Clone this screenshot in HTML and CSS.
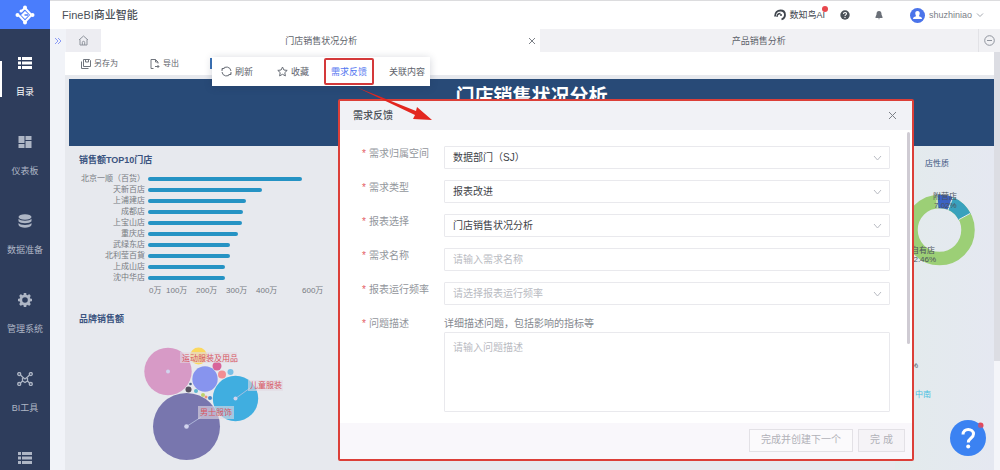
FILE: index.html
```html
<!DOCTYPE html>
<html lang="zh-CN">
<head>
<meta charset="utf-8">
<title>FineBI商业智能</title>
<link rel="stylesheet" href="styles.css">
</head>
<body>
<div class="app">
  <nav class="sidebar">
    <a class="logo" href="#" aria-label="FineBI">
      <svg width="20" height="20" viewBox="0 0 20 20" fill="none" stroke="#fff">
        <path d="M6 6.500 10 3l6.500 7L10 17l-6-6.500" stroke-width="2"/>
        <path d="M10 6 14 10 10 14 6 10z" fill="#fff" stroke="none"/>
        <path d="M9.500 10H13" stroke="#4a7dfc" stroke-width="1.500"/>
        <g fill="#fff" stroke="none"><circle cx="10" cy="2.500" r="2"/><circle cx="17.500" cy="10" r="2"/><circle cx="10" cy="17.500" r="2"/><circle cx="2.500" cy="10" r="2"/><circle cx="6" cy="6" r="1.500"/></g>
      </svg>
    </a>
    <a class="nav-item active" href="#">
      <svg width="16" height="14" viewBox="0 0 16 14" fill="currentColor"><path d="M1 1h3v3H1zM5 1h10v3H5zM1 5.500h3v3H1zM5 5.500h10v3H5zM1 10h3v3H1zM5 10h10v3H5z"/></svg>
      <span>目录</span>
    </a>
    <a class="nav-item" href="#">
      <svg width="16" height="14" viewBox="0 0 16 14" fill="currentColor"><path d="M1.500 1h6v7h-6zM8.500 1h6v4h-6zM1.500 9h6v4h-6zM8.500 6h6v7h-6z"/></svg>
      <span>仪表板</span>
    </a>
    <a class="nav-item" href="#">
      <svg width="16" height="14" viewBox="0 0 16 14" fill="currentColor"><ellipse cx="8" cy="3" rx="6.500" ry="2.800"/><path d="M1.500 4.800c1.500 2.600 11.500 2.600 13 0v2.400c-1.500 2.600-11.500 2.600-13 0zM1.500 9c1.500 2.600 11.500 2.600 13 0v2c-1.500 3.600-11.500 3.600-13 0z"/></svg>
      <span>数据准备</span>
    </a>
    <a class="nav-item" href="#">
      <svg width="16" height="14" viewBox="0 0 16 14" fill="none" stroke="currentColor"><circle cx="8" cy="7" r="4.200" stroke-width="2.800"/><path d="M8 0v2M8 12v2M1 7h2M13 7h2M3 2l1.500 1.500M11.500 10.500 13 12M13 2l-1.500 1.500M4.500 10.500 3 12" stroke-width="2.600"/></svg>
      <span>管理系统</span>
    </a>
    <a class="nav-item" href="#">
      <svg width="16" height="14" viewBox="0 0 16 14" fill="none" stroke="currentColor" stroke-width="1.300"><circle cx="2.200" cy="2" r="1.500"/><circle cx="13.800" cy="2" r="1.500"/><circle cx="2.200" cy="12" r="1.500"/><circle cx="13.800" cy="12" r="1.500"/><path d="M3.500 3 6 5.500M12.500 3 10 5.500M3.500 11 6 8.500M12.500 11 10 8.500M5.500 5l2.500 2 2.500-2M5.500 6v3L8 10.500 10.500 9V6"/></svg>
      <span>BI工具</span>
    </a>
    <a class="nav-item" href="#" aria-label="更多">
      <svg width="16" height="14" viewBox="0 0 16 14" fill="currentColor"><path d="M1 1h3v3H1zM5 1h10v3H5zM1 5.500h3v3H1zM5 5.500h10v3H5zM1 10h3v3H1zM5 10h10v3H5z"/></svg>
    </a>
  </nav>

  <div class="main">
    <header class="topbar">
      <h1 class="brand">FineBI商业智能</h1>
      <a class="ai-link" href="#">
        <svg width="12" height="12" viewBox="0 0 12 12" fill="none" stroke="#3f454d"><path d="M1 7.500C1 3.500 3.500 1.500 6.500 1.500c2.800 0 4.500 2 4.500 4.500 0 2.200-1.200 3.700-3.500 4.500" stroke-width="1.800"/><path d="M3 8c0-2 1.500-3.500 3.500-3.500" stroke-width="1.300"/><circle cx="7" cy="6" r="1" fill="#3f454d" stroke="none"/></svg>
        <span>数知鸟AI</span>
        <i class="dot"></i>
      </a>
      <button class="icon-button" aria-label="帮助">
        <svg width="10" height="10" viewBox="0 0 10 10"><circle cx="5" cy="5" r="4.700" fill="#4b5158"/><path d="M3.500 4c0-2 3-2 3-.2C6.500 5 5 4.800 5 6" fill="none" stroke="#fff" stroke-width="1.100"/><circle cx="5" cy="7.500" r=".7" fill="#fff"/></svg>
      </button>
      <button class="icon-button" aria-label="通知">
        <svg width="10" height="10" viewBox="0 0 10 10" fill="#6b7078"><path d="M5 1c2 0 2.500 1.500 2.500 3.500L8.500 7v1h-7V7l1-2.500C2.500 2.500 3 1 5 1zM4 8.500h2L5 9.500z"/></svg>
      </button>
      <button class="user">
        <svg width="15" height="15" viewBox="0 0 15 15"><circle cx="7.500" cy="7.500" r="7.500" fill="#4b74ea"/><path d="M7.500 3C9.200 3 10 4.200 9.700 5.800 9.500 7 9 7.500 9 8.200c2 .6 3 1 3 2.800H3c0-1.800 1-2.200 3-2.800 0-.7-.5-1.200-.7-2.400C5 4.200 5.800 3 7.500 3z" fill="#fff"/></svg>
        <span>shuzhiniao</span>
        <svg width="8" height="6" viewBox="0 0 8 6" fill="none" stroke="#a5a9b0"><path d="M1 1.500 4 4.500 7 1.500"/></svg>
      </button>
    </header>

    <div class="tabs">
      <button class="expand" aria-label="展开"><svg width="8" height="8" viewBox="0 0 8 8" fill="none" stroke="#8b9bf5"><path d="M1 1l3 3-3 3M4 1l3 3-3 3"/></svg></button>
      <button class="home" aria-label="首页"><svg width="11" height="11" viewBox="0 0 11 11" fill="none" stroke="#8d929b"><path d="M1 5 5.500 1 10 5M2 4.500V10h7V4.500M4.300 10V7.500a1.200 1.200 0 0 1 2.400 0V10"/></svg></button>
      <div class="tab current"><span>门店销售状况分析</span><button aria-label="关闭标签"><svg width="8" height="8" viewBox="0 0 8 8" fill="none" stroke="#7c8087"><path d="M1 1l6 6M7 1 1 7"/></svg></button></div>
      <div class="tab"><span>产品销售分析</span></div>
      <button class="tab-menu" aria-label="标签菜单"><svg width="11" height="11" viewBox="0 0 11 11" fill="none" stroke="#8f949d"><circle cx="5.500" cy="5.500" r="4.800"/><path d="M3 5.500h5"/></svg></button>
    </div>

    <div class="workspace">
      <div class="page">
        <div class="toolbar">
          <button><svg width="10" height="10" viewBox="0 0 10 10" fill="none" stroke="#70757d"><path d="M2.500.5h6l1 1v6h-7zM4.500.5v2.500h3V.5M.5 2.500v7h7"/></svg>另存为</button>
          <button><svg width="10" height="10" viewBox="0 0 10 10" fill="none" stroke="#70757d"><path d="M3.500 9.500H1v-9h4.500L8 3v1.500M5.500.5V3H8M5 7.500h4M7.500 6 9 7.500 7.500 9"/></svg>导出</button>
          <i class="marker"></i>
        </div>
        <div class="banner">门店销售状况分析</div>
        <div class="board">
          <div class="left">
            <section>
              <h2>销售额TOP10门店</h2>
              <div class="bars">
                <span>北京一顺（百货）</span><i style="width:154px"></i>
                <span>天新百店</span><i style="width:114px"></i>
                <span>上浦建店</span><i style="width:98px"></i>
                <span>成都店</span><i style="width:95px"></i>
                <span>上宝山店</span><i style="width:94px"></i>
                <span>重庆店</span><i style="width:90px"></i>
                <span>武绿东店</span><i style="width:82px"></i>
                <span>北利莹百貨</span><i style="width:82px"></i>
                <span>上成山店</span><i style="width:77px"></i>
                <span>沈中华店</span><i style="width:77px"></i>
              </div>
              <div class="axis"><span>0万</span><span>100万</span><span>200万</span><span>300万</span><span>400万</span><span>600万</span></div>
            </section>
            <section class="brands">
              <h2>品牌销售额</h2>
              <svg class="bubbles" width="150" height="120" viewBox="140 342 150 120">
                <circle cx="168" cy="371.500" r="23.700" fill="#d79ac6"/>
                <circle cx="198.500" cy="356" r="8.500" fill="#fbd85f"/>
                <circle cx="205" cy="379" r="12.700" fill="#8794ee"/>
                <circle cx="235.500" cy="398.500" r="22.700" fill="#40aee0"/>
                <circle cx="186.500" cy="426.500" r="33.500" fill="#7876ae"/>
                <circle cx="217" cy="366" r="4.500" fill="#d8649a"/><circle cx="222" cy="374.500" r="4" fill="#f48d92"/><circle cx="230.500" cy="372" r="3" fill="#79bfe5"/>
                <circle cx="188.500" cy="389.500" r="3" fill="#56505f"/><circle cx="190.500" cy="384" r="1.300" fill="#4d6386"/><circle cx="196" cy="391" r="2" fill="#5cb7cf"/><circle cx="203" cy="395" r="2" fill="#bed26d"/><circle cx="206" cy="397" r="1.500" fill="#ee9580"/><circle cx="210" cy="398" r="2" fill="#4888c8"/>
                <path d="M235.500 398.500 250 388M186.500 426.500l14-9" stroke="#b9c3e2" stroke-width=".8"/>
                <g fill="#d1d3ed"><circle cx="168" cy="371.500" r="2"/><circle cx="235.500" cy="398.500" r="2"/><circle cx="186.500" cy="426.500" r="2.300"/></g>
                <g fill="#e2dbe3" fill-opacity=".6"><path d="M180 352h57v11h-57zM248 380h35v11h-35zM198 406h36v13h-36z"/></g>
                <g class="bubble-text"><text x="182" y="361">运动服装及用品</text><text x="250" y="388">儿童服装</text><text x="200" y="415">男士服饰</text></g>
              </svg>
            </section>
          </div>
          <section class="right">
            <h2>店性质</h2>
            <svg width="99" height="240" viewBox="895 171 99 240">
              <circle cx="939.500" cy="230" r="28.500" fill="none" stroke="#9ccf76" stroke-width="13.500"/>
              <path d="M938 201.500a28.500 28.500 0 0 1 12 1.700" fill="none" stroke="#3b62c4" stroke-width="13.500"/>
              <path d="M950 203.200a28.500 28.500 0 0 1 14.600 13.400" fill="none" stroke="#39a1bd" stroke-width="13.500"/>
              <path d="M937 194v14M953 197l-5 13M959 219.500l11-6" stroke="#e6eaee"/>
              <g class="donut-text"><text x="933" y="199">附营店</text><text x="934" y="208">7.02%</text><text x="911" y="253">自有店</text><text x="909" y="262">82.46%</text><text x="911" y="368">%</text></g>
              <text class="region" x="915" y="397">中南</text>
            </svg>
          </section>
        </div>
      </div>
      <div class="scroll"><i></i></div>
    </div>
  </div>

  <div class="popup">
    <button><svg width="11" height="11" viewBox="0 0 11 11" fill="none" stroke="#686d76"><path d="M1 5V2.500h2.500M1.500 3.500a4.500 4.500 0 0 1 8.500 1.500M10 6v2.500H7.500M9.500 7.500A4.500 4.500 0 0 1 1 6"/></svg>刷新</button>
    <button><svg width="11" height="11" viewBox="0 0 11 11" fill="none" stroke="#686d76"><path d="M5.500 1l1.400 3 3.300.4-2.400 2.200.6 3.300-2.900-1.600-2.900 1.600.6-3.300L.8 4.400 4.100 4z"/></svg>收藏</button>
    <button class="picked">需求反馈</button>
    <button>关联内容</button>
  </div>

  <form class="dialog">
    <div class="dialog-head"><h2>需求反馈</h2><button type="button" aria-label="关闭"><svg width="9" height="9" viewBox="0 0 9 9" fill="none" stroke="#7c8087"><path d="M1 1l7 7M8 1 1 8"/></svg></button></div>
    <div class="dialog-body">
      <div class="fields">
        <label for="space">需求归属空间</label>
        <div class="pick"><select id="space"><option>数据部门（SJ）</option></select><svg width="9" height="6" viewBox="0 0 9 6"><path d="M1 1l3.500 4L8 1"/></svg></div>
        <label for="type">需求类型</label>
        <div class="pick"><select id="type"><option>报表改进</option></select><svg width="9" height="6" viewBox="0 0 9 6"><path d="M1 1l3.500 4L8 1"/></svg></div>
        <label for="report">报表选择</label>
        <div class="pick"><select id="report"><option>门店销售状况分析</option></select><svg width="9" height="6" viewBox="0 0 9 6"><path d="M1 1l3.500 4L8 1"/></svg></div>
        <label for="name">需求名称</label>
        <div class="pick"><input id="name" type="text" placeholder="请输入需求名称"></div>
        <label for="rate">报表运行频率</label>
        <div class="pick"><select id="rate" class="empty"><option>请选择报表运行频率</option></select><svg width="9" height="6" viewBox="0 0 9 6"><path d="M1 1l3.500 4L8 1"/></svg></div>
        <label for="desc">问题描述</label>
        <div class="describe"><p>详细描述问题，包括影响的指标等</p><textarea id="desc" placeholder="请输入问题描述"></textarea></div>
      </div>
      <i class="thumb"></i>
    </div>
    <div class="dialog-foot"><button type="button" class="wide">完成并创建下一个</button><button type="submit">完 成</button></div>
  </form>

  <svg class="arrow" width="80" height="36" viewBox="0 0 80 36" fill="#e3261f"><path d="M3 1 63 25l1-4 15 13-19-1 2-4z"/></svg>

  <button class="help" aria-label="在线帮助">
    <svg width="36" height="36" viewBox="0 0 36 36"><circle cx="30.500" cy="5.500" r="3" fill="#e4485a"/><circle cx="18" cy="18" r="18" fill="#3b82f2"/><circle cx="30.500" cy="5.500" r="2.500" fill="#e4485a" fill-opacity=".7"/><path d="M13 14.500c0-7 10.500-6.500 10.500-.5 0 4.500-5.200 4-5.200 8.500" fill="none" stroke="#fff" stroke-width="3"/><circle cx="18.200" cy="26.500" r="2" fill="#fff"/></svg>
  </button>
</div>
</body>
</html>
```
FILE: styles.css
```css
* { box-sizing: border-box; }
body {
  margin: 0;
  font-family: "Liberation Sans", "Noto Sans CJK SC", sans-serif;
  font-size: 9px;
  line-height: 14px;
  color: #5e636b;
}
h1, h2, p { margin: 0; }
a { color: inherit; text-decoration: none; }
svg { display: block; flex: none; }
button {
  border: 0;
  padding: 0;
  background: none;
  font: inherit;
  color: inherit;
  display: flex;
  align-items: center;
  justify-content: center;
}
.app {
  position: relative;
  display: flex;
  height: 100vh;
  overflow: hidden;
  background: #f1f3f8;
}

/* Sidebar */
.sidebar { flex: none; width: 50px; background: #2e3d5c; color: #aeb6c5; }
.logo { height: 29px; display: flex; align-items: center; justify-content: center; background: #4a7dfc; }
.nav-item {
  position: relative;
  height: 79px;
  padding-top: 27px;
  display: flex;
  flex-direction: column;
  align-items: center;
  gap: 15px;
}
.nav-item.active { color: #fff; }
.nav-item.active::before {
  content: "";
  position: absolute;
  left: 0;
  top: 32px;
  width: 2px;
  height: 36px;
  background: #fff;
}

/* Header */
.main { flex: 1; min-width: 0; display: flex; flex-direction: column; }
.topbar {
  flex: none;
  height: 29px;
  display: flex;
  align-items: center;
  padding: 0 16px 0 12px;
  background: #fff;
  border-top: 1px solid #dcdcde;
}
.brand { flex: 1; font-size: 11px; font-weight: 500; color: #4a4f57; }
.ai-link { position: relative; display: flex; align-items: center; gap: 3px; color: #40454d; }
.dot { position: absolute; right: -3px; top: -2px; width: 6px; height: 6px; border-radius: 50%; background: #e8484d; }
.icon-button { width: 10px; margin-left: 15px; }
.icon-button + .icon-button { margin-left: 24px; }
.user { margin-left: 26px; gap: 4px; color: #7b8088; }

/* Tabs */
.tabs { flex: none; height: 23px; display: flex; background: #f1f1f4; }
.expand { width: 16px; background: #f1f3f8; }
.home { width: 35px; background: #ededf2; }
.tab { flex: 1; display: flex; align-items: center; padding: 0 9px; }
.tab span { flex: 1; text-align: center; }
.tab.current { background: #fff; padding: 0 4px 0 14px; }
.tab-menu { width: 22px; border-left: 1px solid #e2e2e6; }

/* Report page */
.workspace { flex: 1; min-height: 0; display: flex; padding-left: 15px; }
.page { flex: 1; display: flex; flex-direction: column; background: #e7e9ee; }
.toolbar {
  flex: none;
  height: 23px;
  display: flex;
  align-items: center;
  gap: 32px;
  padding-left: 16px;
  margin-bottom: 4px;
  background: #fff;
  font-size: 8px;
}
.toolbar button { gap: 3px; }
.marker { width: 8px; height: 11px; margin-left: -1px; background: #3c74b8; }
.banner {
  flex: none;
  height: 67px;
  margin-left: 4px;
  padding-top: 5px;
  background: #284a77;
  color: #fff;
  font-size: 19px;
  font-weight: 700;
  line-height: 26px;
  text-align: center;
}
.board { flex: 1; display: flex; justify-content: space-between; }
.board h2 { font-size: 9px; font-weight: 700; color: #3b5480; }
.left { padding: 7px 0 0 14px; }
.bars {
  display: grid;
  grid-template-columns: 66px auto;
  grid-auto-rows: 11px;
  align-items: center;
  column-gap: 3px;
  margin-top: 6px;
  font-size: 8px;
  line-height: 11px;
  color: #777b82;
}
.bars span { text-align: right; white-space: nowrap; justify-self: end; }
.bars i { height: 4px; border-radius: 2px; background: #2593c4; }
.axis {
  display: grid;
  grid-template-columns: 17px 30px 30px 30px 46px 30px;
  padding: 1px 0 0 70px;
  font-size: 8px;
  color: #777b82;
}
.brands { margin-top: 14px; }
.bubbles { margin: 16px 0 0 61px; }
.bubble-text { font-size: 8px; fill: #d8555f; }
.right { width: 99px; padding-top: 11px; background: linear-gradient(90deg, #e3ebec, #e5e8f1); }
.board .right h2 { margin-left: 30px; font-size: 8px; font-weight: 400; }
.donut-text { font-size: 8px; fill: #4c535c; }
.region { font-size: 8px; fill: #48bfe0; }
.scroll { width: 6px; background: #f4f5f9; }
.scroll i { display: block; height: 309px; background: #dcdde3; }

/* Floating report menu */
.popup {
  position: absolute;
  left: 212px;
  top: 57px;
  height: 29px;
  display: flex;
  align-items: center;
  padding-right: 5px;
  background: #fff;
  box-shadow: 0 1px 8px rgba(30, 40, 70, .2);
}
.popup button { width: 50px; height: 27px; gap: 3px; margin-right: 6px; }
.popup button:last-child { width: 36px; margin: 0 0 0 15px; }
.popup .picked { margin: 0; border: 2px solid #d4393a; border-radius: 2px; color: #5376f0; }

/* Feedback dialog */
.dialog {
  position: absolute;
  left: 338px;
  right: 86px;
  top: 99px;
  bottom: 9px;
  display: flex;
  flex-direction: column;
  border: 2px solid #dc3f38;
  border-radius: 2px;
  background: #fff;
  font-size: 10px;
}
.dialog-head {
  flex: none;
  height: 29px;
  display: flex;
  align-items: center;
  justify-content: space-between;
  padding: 0 15px 0 13px;
  background: #f1f2f6;
}
.dialog-head h2 { font-size: 10px; font-weight: 500; color: #4a4f57; }
.dialog-body { flex: 1; min-height: 0; display: flex; padding-right: 2px; }
.fields {
  flex: 1;
  display: grid;
  grid-template-columns: 82px 1fr;
  grid-template-rows: repeat(5, 23px) 1fr;
  row-gap: 11px;
  padding: 16px 17px 11px 22px;
}
.fields label { line-height: 16px; color: #92969c; }
.fields label::before { content: "*"; display: inline-block; width: 7px; color: #e45d63; }
.pick { position: relative; display: flex; }
.pick svg { position: absolute; right: 8px; top: 9px; fill: none; stroke: #b9bcc3; pointer-events: none; }
.fields select, .fields input, .fields textarea {
  appearance: none;
  flex: 1;
  width: 100%;
  margin: 0;
  padding: 0 8px;
  border: 1px solid #e9e9ed;
  border-radius: 1px;
  background: #fff;
  font: inherit;
  color: #3e4248;
  outline: 0;
  resize: none;
}
.fields .empty, .fields ::placeholder { color: #b9bbc2; }
.describe { display: flex; flex-direction: column; min-height: 0; color: #858990; }
.describe p { line-height: 16px; }
.fields textarea { padding: 8px; }
.thumb { width: 3px; height: 212px; margin-top: 2px; border-radius: 2px; background: #cfcbd3; }
.dialog-foot {
  flex: none;
  height: 36px;
  display: flex;
  align-items: center;
  justify-content: flex-end;
  gap: 5px;
  padding: 0 7px 2px 0;
  background: #f9f7fb;
}
.dialog-foot button { width: 47px; height: 23px; border: 1px solid #e3e1e6; background: #f5f3f7; color: #b1b1b8; }
.dialog-foot .wide { width: 104px; background: #fbfafc; }

.arrow { position: absolute; left: 353px; top: 86px; }
.help { position: absolute; right: 14px; bottom: 14px; }
```
